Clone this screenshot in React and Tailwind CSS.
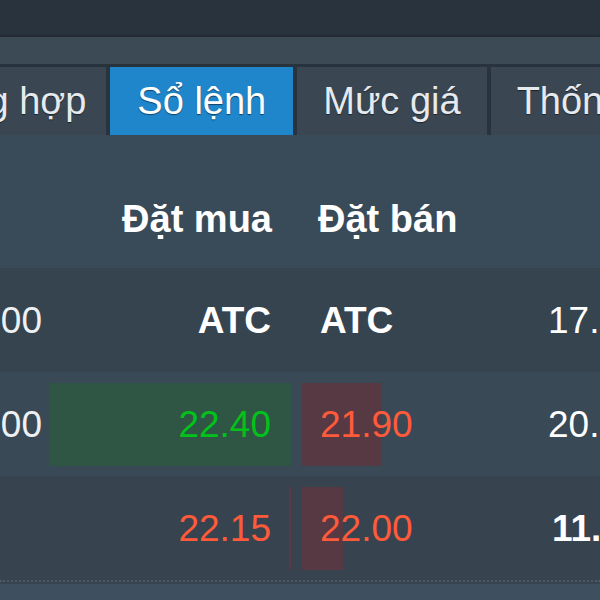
import React from 'react';

const rows = [
  { left: '00', buy: 'ATC', buyColor: 'text-white font-bold', sell: 'ATC', sellColor: 'text-white font-bold', buyBar: 0, sellBar: 0, last: '17.', lastBold: false, bg: 'bg-[#36444f]' },
  { left: '00', buy: '22.40', buyColor: 'text-[#00c21a]', sell: '21.90', sellColor: 'text-[#ff5a3a]', buyBar: 241, sellBar: 80, last: '20.', lastBold: false, bg: 'bg-[#394955]' },
  { left: '', buy: '22.15', buyColor: 'text-[#ff5a3a]', sell: '22.00', sellColor: 'text-[#ff5a3a]', buyBar: 2, sellBar: 41, last: '11.', lastBold: true, bg: 'bg-[#37444f]' },
];

const tabs = [
  { label: 'Tổng hợp', active: false },
  { label: 'Sổ lệnh', active: true },
  { label: 'Mức giá', active: false },
  { label: 'Thống kê', active: false },
];

function App() {
  return (
    <div className="w-[600px] h-[600px] overflow-hidden bg-[#374552] font-['Liberation_Sans',Arial,sans-serif] text-white">
      {/* top bar */}
      <div className="h-[37px] bg-[#29333d] border-b-2 border-[#222b33]"></div>
      <div className="h-[27px] bg-[#3c4a56]"></div>

      {/* tabs */}
      <div className="h-[71px] bg-[#29333d] pt-[3px] flex gap-[4px] whitespace-nowrap">
        {tabs.map((t, i) => (
          <div
            key={t.label}
            className={
              'h-[68px] flex items-center text-[38px] leading-none shrink-0 [text-shadow:0_1px_1px_rgba(0,0,0,0.5)] ' +
              (t.active ? 'bg-[#1f86cb] text-white px-[27px]' : 'bg-[#3a4753] text-[#e6eaee] px-[26px]') +
              (i === 0 ? ' ml-[-104px] pr-[20px]' : '')
            }
          >
            {t.label}
          </div>
        ))}
      </div>

      {/* header */}
      <div className="h-[133px] bg-[#394a58] flex items-end pb-[30px] text-[38px] font-bold leading-none">
        <div className="w-[48px] shrink-0"></div>
        <div className="w-[245px] shrink-0 text-right pr-[21px]">Đặt mua</div>
        <div className="w-[7px] shrink-0"></div>
        <div className="w-[220px] shrink-0 pl-[18px]">Đặt bán</div>
      </div>

      {/* rows */}
      {rows.map((r, i) => (
        <div key={i} className={'h-[104px] flex items-center text-[37px] leading-none whitespace-nowrap ' + r.bg}>
          <div className="w-[48px] shrink-0 text-right pr-[6px] text-[#eef1f3]">{r.left}</div>
          <div className="w-[245px] shrink-0 h-full relative flex items-center justify-end pr-[22px]">
            {r.buyBar > 0 && (
              <div className="absolute right-[2px] top-[11px] bottom-[10px] bg-[#2f5545]" style={{ width: r.buyBar, backgroundColor: r.buyBar < 5 ? '#5a3844' : undefined }}></div>
            )}
            <span className={'relative ' + r.buyColor}>{r.buy}</span>
          </div>
          <div className="w-[7px] shrink-0"></div>
          <div className="w-[220px] shrink-0 h-full relative flex items-center pl-[20px]">
            {r.sellBar > 0 && (
              <div className="absolute left-[2px] top-[11px] bottom-[10px] bg-[#573944]" style={{ width: r.sellBar }}></div>
            )}
            <span className={'relative ' + r.sellColor}>{r.sell}</span>
          </div>
          <div className="w-[28px] shrink-0"></div>
          <div className={'shrink-0 ' + (r.lastBold ? 'font-bold pl-[4px]' : '')}>{r.last}</div>
        </div>
      ))}

      <div className="h-[4px] bg-[#37444f] border-t-2 border-dotted border-[#4a5a68]"></div>
      <div className="h-[20px] bg-[#3e5060]"></div>
    </div>
  );
}

export default App;
